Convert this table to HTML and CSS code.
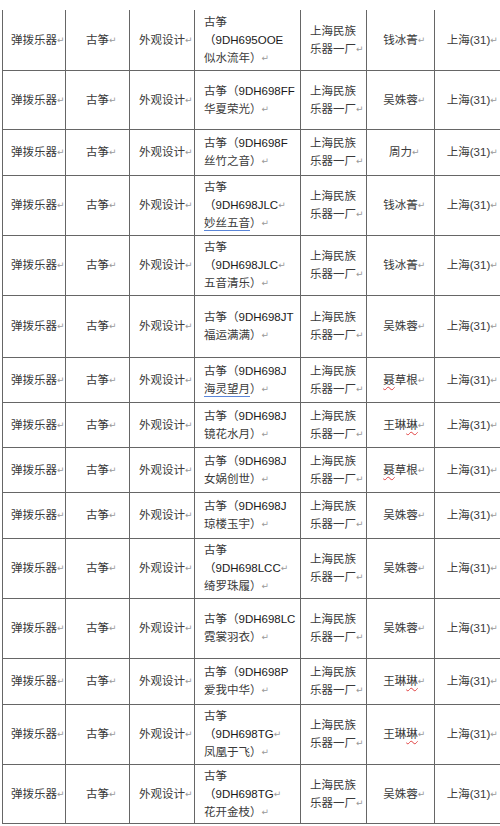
FILE: index.html
```html
<!DOCTYPE html>
<html lang="zh-CN">
<head>
<meta charset="utf-8">
<title>古筝外观设计</title>
<link rel="stylesheet" href="styles.css">
</head>
<body>
<div class="sheet">
<table class="grid">
<colgroup>
<col class="c1"><col class="c2"><col class="c3"><col class="c4"><col class="c5"><col class="c6"><col class="c7">
</colgroup>
<tbody>
<tr class="h60">
<td class="ctr">弹拨乐器<span class="ret">↵</span></td><td class="ctr">古筝<span class="ret">↵</span></td><td class="ctr">外观设计<span class="ret">↵</span></td>
<td class="lft">古筝<br><span class="code">（9DH695OOE</span><br>似水流年）<span class="ret">↵</span></td>
<td class="lft">上海民族<br>乐器一厂<span class="ret">↵</span></td><td class="ctr">钱冰菁<span class="ret">↵</span></td><td class="ctr">上海(31)<span class="ret">↵</span></td>
</tr>
<tr class="h59">
<td class="ctr">弹拨乐器<span class="ret">↵</span></td><td class="ctr">古筝<span class="ret">↵</span></td><td class="ctr">外观设计<span class="ret">↵</span></td>
<td class="lft">古筝（<span class="code">9DH698FF</span><br>华夏荣光）<span class="ret">↵</span></td>
<td class="lft">上海民族<br>乐器一厂<span class="ret">↵</span></td><td class="ctr">吴姝蓉<span class="ret">↵</span></td><td class="ctr">上海(31)<span class="ret">↵</span></td>
</tr>
<tr class="h46">
<td class="ctr">弹拨乐器<span class="ret">↵</span></td><td class="ctr">古筝<span class="ret">↵</span></td><td class="ctr">外观设计<span class="ret">↵</span></td>
<td class="lft">古筝（<span class="code">9DH698F</span><br>丝竹之音）<span class="ret">↵</span></td>
<td class="lft">上海民族<br>乐器一厂<span class="ret">↵</span></td><td class="ctr">周力<span class="ret">↵</span></td><td class="ctr">上海(31)<span class="ret">↵</span></td>
</tr>
<tr class="h60">
<td class="ctr">弹拨乐器<span class="ret">↵</span></td><td class="ctr">古筝<span class="ret">↵</span></td><td class="ctr">外观设计<span class="ret">↵</span></td>
<td class="lft">古筝<br><span class="code">（9DH698JLC</span><span class="ret">↵</span><br><span class="gram">妙丝五音</span>）<span class="ret">↵</span></td>
<td class="lft">上海民族<br>乐器一厂<span class="ret">↵</span></td><td class="ctr">钱冰菁<span class="ret">↵</span></td><td class="ctr">上海(31)<span class="ret">↵</span></td>
</tr>
<tr class="h60">
<td class="ctr">弹拨乐器<span class="ret">↵</span></td><td class="ctr">古筝<span class="ret">↵</span></td><td class="ctr">外观设计<span class="ret">↵</span></td>
<td class="lft">古筝<br><span class="code">（9DH698JLC</span><span class="ret">↵</span><br>五音清乐）<span class="ret">↵</span></td>
<td class="lft">上海民族<br>乐器一厂<span class="ret">↵</span></td><td class="ctr">钱冰菁<span class="ret">↵</span></td><td class="ctr">上海(31)<span class="ret">↵</span></td>
</tr>
<tr class="h62">
<td class="ctr">弹拨乐器<span class="ret">↵</span></td><td class="ctr">古筝<span class="ret">↵</span></td><td class="ctr">外观设计<span class="ret">↵</span></td>
<td class="lft">古筝（<span class="code">9DH698JT</span><br>福运满满）<span class="ret">↵</span></td>
<td class="lft">上海民族<br>乐器一厂<span class="ret">↵</span></td><td class="ctr">吴姝蓉<span class="ret">↵</span></td><td class="ctr">上海(31)<span class="ret">↵</span></td>
</tr>
<tr class="h45">
<td class="ctr">弹拨乐器<span class="ret">↵</span></td><td class="ctr">古筝<span class="ret">↵</span></td><td class="ctr">外观设计<span class="ret">↵</span></td>
<td class="lft">古筝（<span class="code">9DH698J</span><br><span class="gram">海灵望月</span>）<span class="ret">↵</span></td>
<td class="lft">上海民族<br>乐器一厂<span class="ret">↵</span></td><td class="ctr"><span class="spell">聂</span>草根<span class="ret">↵</span></td><td class="ctr">上海(31)<span class="ret">↵</span></td>
</tr>
<tr class="h45">
<td class="ctr">弹拨乐器<span class="ret">↵</span></td><td class="ctr">古筝<span class="ret">↵</span></td><td class="ctr">外观设计<span class="ret">↵</span></td>
<td class="lft">古筝（<span class="code">9DH698J</span><br>镜花水月）<span class="ret">↵</span></td>
<td class="lft">上海民族<br>乐器一厂<span class="ret">↵</span></td><td class="ctr">王琳<span class="spell">琳</span><span class="ret">↵</span></td><td class="ctr">上海(31)<span class="ret">↵</span></td>
</tr>
<tr class="h45">
<td class="ctr">弹拨乐器<span class="ret">↵</span></td><td class="ctr">古筝<span class="ret">↵</span></td><td class="ctr">外观设计<span class="ret">↵</span></td>
<td class="lft">古筝（<span class="code">9DH698J</span><br>女娲创世）<span class="ret">↵</span></td>
<td class="lft">上海民族<br>乐器一厂<span class="ret">↵</span></td><td class="ctr"><span class="spell">聂</span>草根<span class="ret">↵</span></td><td class="ctr">上海(31)<span class="ret">↵</span></td>
</tr>
<tr class="h46">
<td class="ctr">弹拨乐器<span class="ret">↵</span></td><td class="ctr">古筝<span class="ret">↵</span></td><td class="ctr">外观设计<span class="ret">↵</span></td>
<td class="lft">古筝（<span class="code">9DH698J</span><br>琼楼玉宇）<span class="ret">↵</span></td>
<td class="lft">上海民族<br>乐器一厂<span class="ret">↵</span></td><td class="ctr">吴姝蓉<span class="ret">↵</span></td><td class="ctr">上海(31)<span class="ret">↵</span></td>
</tr>
<tr class="h60">
<td class="ctr">弹拨乐器<span class="ret">↵</span></td><td class="ctr">古筝<span class="ret">↵</span></td><td class="ctr">外观设计<span class="ret">↵</span></td>
<td class="lft">古筝<br><span class="code">（9DH698LCC</span><span class="ret">↵</span><br>绮罗珠履）<span class="ret">↵</span></td>
<td class="lft">上海民族<br>乐器一厂<span class="ret">↵</span></td><td class="ctr">吴姝蓉<span class="ret">↵</span></td><td class="ctr">上海(31)<span class="ret">↵</span></td>
</tr>
<tr class="h60">
<td class="ctr">弹拨乐器<span class="ret">↵</span></td><td class="ctr">古筝<span class="ret">↵</span></td><td class="ctr">外观设计<span class="ret">↵</span></td>
<td class="lft">古筝（<span class="code">9DH698LC</span><br>霓裳羽衣）<span class="ret">↵</span></td>
<td class="lft">上海民族<br>乐器一厂<span class="ret">↵</span></td><td class="ctr">吴姝蓉<span class="ret">↵</span></td><td class="ctr">上海(31)<span class="ret">↵</span></td>
</tr>
<tr class="h46">
<td class="ctr">弹拨乐器<span class="ret">↵</span></td><td class="ctr">古筝<span class="ret">↵</span></td><td class="ctr">外观设计<span class="ret">↵</span></td>
<td class="lft">古筝（<span class="code">9DH698P</span><br>爱我中华）<span class="ret">↵</span></td>
<td class="lft">上海民族<br>乐器一厂<span class="ret">↵</span></td><td class="ctr">王琳<span class="spell">琳</span><span class="ret">↵</span></td><td class="ctr">上海(31)<span class="ret">↵</span></td>
</tr>
<tr class="h60">
<td class="ctr">弹拨乐器<span class="ret">↵</span></td><td class="ctr">古筝<span class="ret">↵</span></td><td class="ctr">外观设计<span class="ret">↵</span></td>
<td class="lft">古筝<br><span class="code">（9DH698TG</span><span class="ret">↵</span><br>凤凰于飞）<span class="ret">↵</span></td>
<td class="lft">上海民族<br>乐器一厂<span class="ret">↵</span></td><td class="ctr">王琳<span class="spell">琳</span><span class="ret">↵</span></td><td class="ctr">上海(31)<span class="ret">↵</span></td>
</tr>
<tr class="h59">
<td class="ctr">弹拨乐器<span class="ret">↵</span></td><td class="ctr">古筝<span class="ret">↵</span></td><td class="ctr">外观设计<span class="ret">↵</span></td>
<td class="lft">古筝<br><span class="code">（9DH698TG</span><span class="ret">↵</span><br>花开金枝）<span class="ret">↵</span></td>
<td class="lft">上海民族<br>乐器一厂<span class="ret">↵</span></td><td class="ctr">吴姝蓉<span class="ret">↵</span></td><td class="ctr">上海(31)<span class="ret">↵</span></td>
</tr>
</tbody>
</table>
</div>
</body>
</html>
```

FILE: styles.css
```css
html, body {
  margin: 0;
  padding: 0;
  background: #ffffff;
}

body {
  width: 500px;
  height: 826px;
  overflow: hidden;
  font-family: "Liberation Sans", "Noto Sans CJK SC", sans-serif;
  font-size: 11.5px;
  line-height: 18px;
  color: #3a3a3a;
}

.sheet {
  padding-top: 10px;
  padding-left: 2px;
}

.grid {
  table-layout: fixed;
  border-collapse: collapse;
  width: 500px;
}

.c1 { width: 63px; }
.c2 { width: 64px; }
.c3 { width: 65px; }
.c4 { width: 106px; }
.c5 { width: 66px; }
.c6 { width: 68px; }
.c7 { width: 68px; }

.grid td {
  border-left: 1px solid #666666;
  border-right: 1px solid #666666;
  border-bottom: 1px solid #666666;
  padding: 0;
  vertical-align: middle;
  white-space: nowrap;
}

.h60 { height: 60px; }
.h59 { height: 59px; }
.h62 { height: 62px; }
.h46 { height: 46px; }
.h45 { height: 45px; }

.ctr {
  text-align: center;
}

.lft {
  text-align: left;
  padding-left: 9px !important;
}

.code {
  color: #1a1a1a;
}

.ret {
  display: inline-block;
  width: 0;
  font-family: "DejaVu Sans", sans-serif;
  font-size: 9px;
  color: #999999;
  vertical-align: 1px;
}

.gram {
  text-decoration: underline;
  text-decoration-color: #5b86d8;
  text-decoration-thickness: 1px;
  text-underline-offset: 3px;
}

.spell {
  text-decoration: underline wavy;
  text-decoration-color: #e04040;
  text-decoration-thickness: 1px;
  text-underline-offset: 2px;
}
```
